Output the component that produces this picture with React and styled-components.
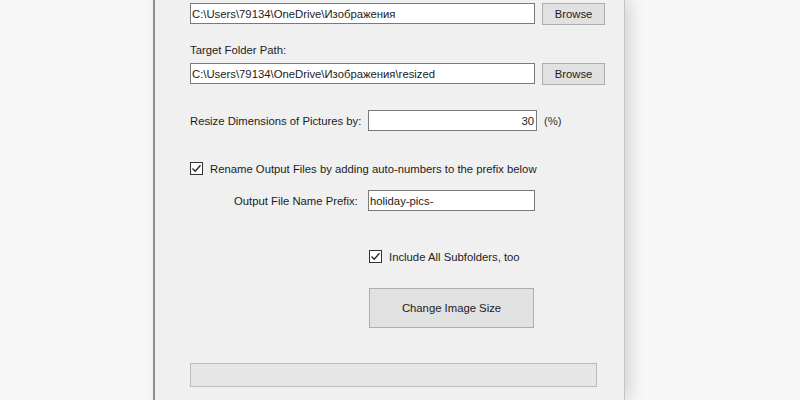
import styled, { createGlobalStyle } from "styled-components";

const GlobalStyle = createGlobalStyle`
  html, body {
    margin: 0;
    padding: 0;
    background: #f7f7f7;
  }
  body {
    font-family: "Liberation Sans", Arial, sans-serif;
    font-size: 11.3px;
    color: #1c1c1c;
  }
`;

const Desktop = styled.div`
  width: 800px;
  height: 400px;
  overflow: hidden;
  display: flex;
`;

const Window = styled.div`
  margin-left: 153px;
  width: 472px;
  height: 400px;
  background: #f0f0f0;
  border-left: 2px solid #8f8f8f;
  border-right: 1px solid #c4c4c4;
  box-shadow: 6px 0 14px rgba(0, 0, 0, 0.13);
  padding: 3px 0 0 35px;
  box-sizing: border-box;
  display: flex;
  flex-direction: column;
`;

const Row = styled.div`
  display: flex;
  align-items: center;
  margin-top: ${(p) => p.$top || 0}px;
  padding-left: ${(p) => p.$indent || 0}px;
  height: ${(p) => p.$height || 22}px;
`;

const Label = styled.span`
  width: ${(p) => (p.$width ? `${p.$width}px` : "auto")};
  white-space: nowrap;
`;

const TextBox = styled.div`
  width: ${(p) => p.$width}px;
  height: 21px;
  box-sizing: border-box;
  background: #fff;
  border: 1px solid #7a7a7a;
  padding: 0 2px 0 1px;
  display: flex;
  align-items: center;
  justify-content: ${(p) => (p.$right ? "flex-end" : "flex-start")};
  white-space: nowrap;
  overflow: hidden;
`;

const Button = styled.div`
  width: ${(p) => p.$width}px;
  height: ${(p) => p.$height}px;
  margin-left: ${(p) => p.$left || 0}px;
  box-sizing: border-box;
  background: #e1e1e1;
  border: 1px solid #adadad;
  display: flex;
  align-items: center;
  justify-content: center;
`;

const Unit = styled.span`
  margin-left: 7px;
  color: #333;
`;

const CheckBox = styled.span`
  width: 13px;
  height: 13px;
  box-sizing: border-box;
  border: 1px solid #333;
  background: #fff;
  margin-right: 7px;
  display: flex;
  align-items: center;
  justify-content: center;
`;

const Progress = styled.div`
  width: 407px;
  height: 24px;
  box-sizing: border-box;
  background: #e6e6e6;
  border: 1px solid #bcbcbc;
`;

function Check() {
  return (
    <CheckBox>
      <svg width="11" height="11" viewBox="0 0 11 11">
        <path d="M1.5 5.5 L4.2 8.2 L9.5 2.2" fill="none" stroke="#222" strokeWidth="1.3" />
      </svg>
    </CheckBox>
  );
}

export default function App() {
  return (
    <>
      <GlobalStyle />
      <Desktop>
        <Window>
          <Row $height={21}>
            <TextBox $width={345}>C:\Users\79134\OneDrive\Изображения</TextBox>
            <Button $width={63} $height={22} $left={7}>Browse</Button>
          </Row>
          <Row $top={18} $height={16}>
            <Label>Target Folder Path:</Label>
          </Row>
          <Row $top={5} $height={21}>
            <TextBox $width={345}>C:\Users\79134\OneDrive\Изображения\resized</TextBox>
            <Button $width={63} $height={22} $left={7}>Browse</Button>
          </Row>
          <Row $top={26} $height={21}>
            <Label $width={178}>Resize Dimensions of Pictures by:</Label>
            <TextBox $width={169} $right>30</TextBox>
            <Unit>(%)</Unit>
          </Row>
          <Row $top={30} $height={15}>
            <Check />
            <Label>Rename Output Files by adding auto-numbers to the prefix below</Label>
          </Row>
          <Row $top={14} $height={21} $indent={44}>
            <Label $width={134}>Output File Name Prefix:</Label>
            <TextBox $width={167}>holiday-pics-</TextBox>
          </Row>
          <Row $top={38} $height={15} $indent={179}>
            <Check />
            <Label>Include All Subfolders, too</Label>
          </Row>
          <Row $top={24} $height={40} $indent={179}>
            <Button $width={165} $height={40}>Change Image Size</Button>
          </Row>
          <Row $top={35} $height={24}>
            <Progress />
          </Row>
        </Window>
      </Desktop>
    </>
  );
}
